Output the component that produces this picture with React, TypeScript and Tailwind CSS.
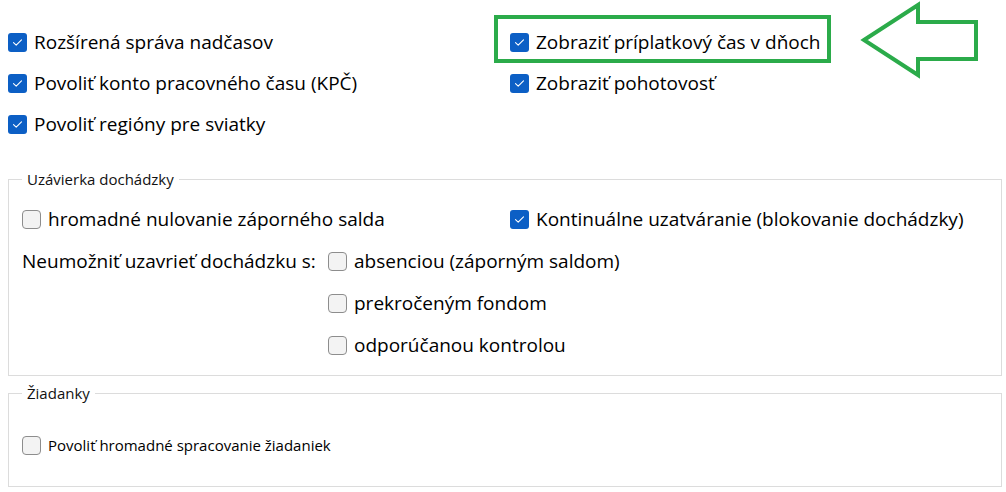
import React from 'react';

const FONT = "font-['Open_Sans','Noto_Sans',sans-serif]";

function Box({ checked }: { checked?: boolean }) {
  if (checked) {
    return (
      <span className="flex h-[19px] w-[19px] shrink-0 items-center justify-center rounded-[3px] bg-[#0c5fc5]">
        <svg width="11" height="9" viewBox="0 0 11 9" fill="none">
          <path d="M1.5 4.6 L4.2 7.2 L9.5 1.8" stroke="#fff" strokeWidth="1.1" strokeLinecap="round" strokeLinejoin="round" />
        </svg>
      </span>
    );
  }
  return <span className="h-[19px] w-[19px] shrink-0 rounded-[4px] border border-[#8d8d8d] bg-[#f3f3f3]" />;
}

function Item({ checked, label, small }: { checked?: boolean; label: string; small?: boolean }) {
  return (
    <label className="flex items-center gap-[7px]">
      <Box checked={checked} />
      <span className={small ? 'text-[15px]' : 'text-[19px]'}>{label}</span>
    </label>
  );
}

export default function App() {
  return (
    <div className={`relative h-[492px] w-[1006px] overflow-hidden bg-white text-black ${FONT}`}>
      {/* top options */}
      <div className="grid grid-cols-[502px_1fr] pl-2 pt-[22px]">
        <div className="flex h-[41px] items-center"><Item checked label="Rozšírená správa nadčasov" /></div>
        <div className="flex h-[41px] items-center"><Item checked label="Zobraziť príplatkový čas v dňoch" /></div>
        <div className="flex h-[41px] items-center"><Item checked label="Povoliť konto pracovného času (KPČ)" /></div>
        <div className="flex h-[41px] items-center"><Item checked label="Zobraziť pohotovosť" /></div>
        <div className="flex h-[41px] items-center"><Item checked label="Povoliť regióny pre sviatky" /></div>
      </div>

      <div className="pl-2 pr-1">
        <fieldset className="mt-6 border border-[#dcdcdc] px-[13px] pt-[9px] pb-[9px]">
          <legend className="px-[5px] text-[15px] leading-[20px] text-[#111]">Uzávierka dochádzky</legend>
          <div className="grid grid-cols-[488px_1fr]">
            <div className="flex h-[42px] items-center"><Item label="hromadné nulovanie záporného salda" /></div>
            <div className="flex h-[42px] items-center"><Item checked label="Kontinuálne uzatváranie (blokovanie dochádzky)" /></div>
          </div>
          <div className="flex">
            <div className="flex h-[42px] w-[306px] items-center text-[19px]">Neumožniť uzavrieť dochádzku s:</div>
            <div className="flex flex-col">
              <div className="flex h-[42px] items-center"><Item label="absenciou (záporným saldom)" /></div>
              <div className="flex h-[42px] items-center"><Item label="prekročeným fondom" /></div>
              <div className="flex h-[42px] items-center"><Item label="odporúčanou kontrolou" /></div>
            </div>
          </div>
        </fieldset>

        <fieldset className="mt-[7px] border border-[#dcdcdc] px-[13px] pt-[27px] pb-[26px]">
          <legend className="px-[5px] text-[15px] leading-[20px] text-[#111]">Žiadanky</legend>
          <div className="flex h-[30px] items-center">
            <Item small label="Povoliť hromadné spracovanie žiadaniek" />
          </div>
        </fieldset>
      </div>

      {/* annotation: highlight + arrow */}
      <div className="pointer-events-none absolute left-[494px] top-[15px] h-[48px] w-[337px] border-4 border-[#2bab4a]" />
      <svg className="pointer-events-none absolute left-[855px] top-0" width="130" height="82" viewBox="0 0 130 82">
        <polygon points="9,40 63,5 63,22 121,22 121,59 63,59 63,75" fill="none" stroke="#2bab4a" strokeWidth="4" strokeLinejoin="miter" />
      </svg>
    </div>
  );
}
